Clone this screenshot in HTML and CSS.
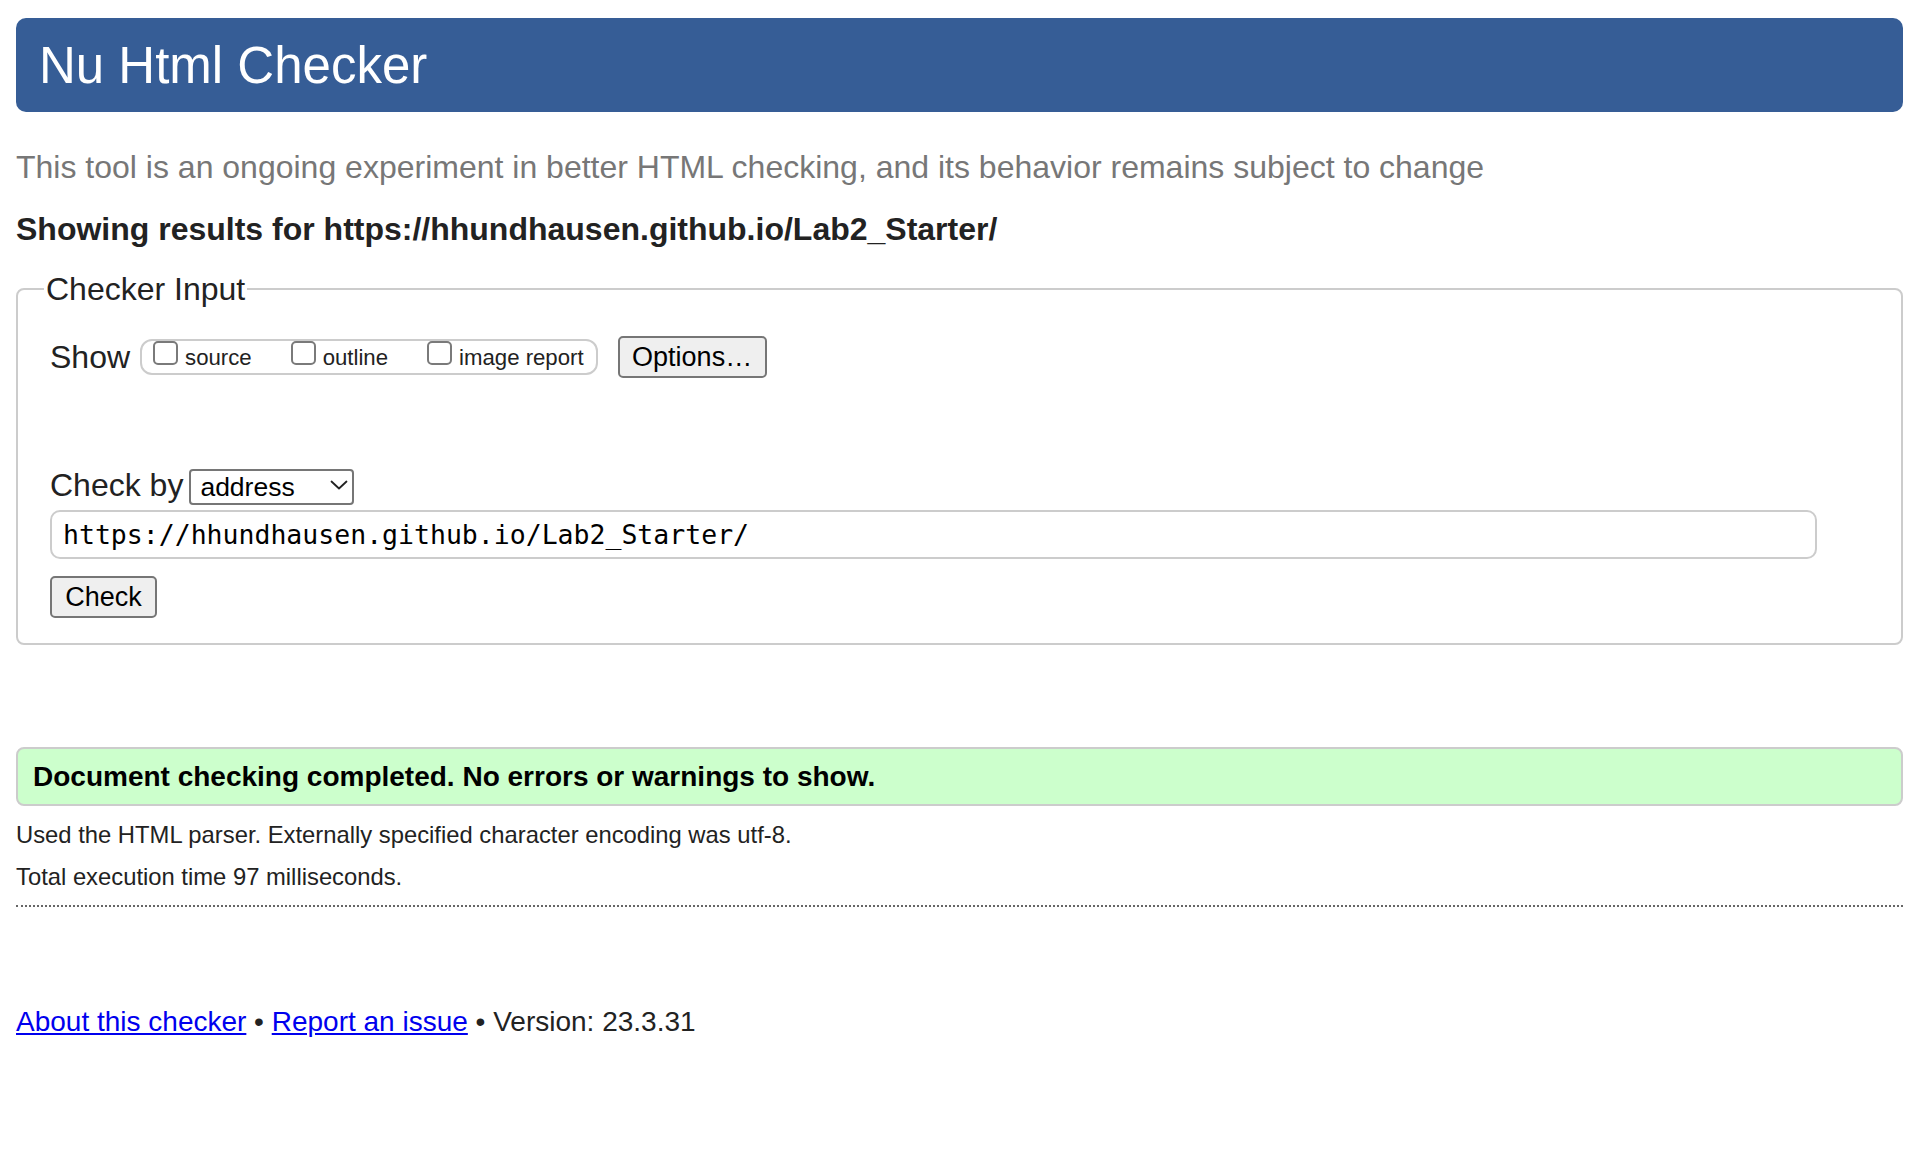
FILE: index.html
```html
<!DOCTYPE html>
<html lang="en">
<head>
<meta charset="utf-8">
<title>Nu Html Checker</title>
<link rel="stylesheet" href="styles.css">
</head>
<body>
<h1 class="banner">Nu Html Checker</h1>
<p class="lede">This tool is an ongoing experiment in better HTML checking, and its behavior remains subject to change</p>
<p class="results-for">Showing results for https://hhundhausen.github.io/Lab2_Starter/</p>
<form class="checker-form">
  <fieldset class="checker">
    <legend class="checker-legend">Checker Input</legend>
    <div class="show-row">
      <span class="row-label">Show</span>
      <span class="show-group"><label class="opt"><input type="checkbox" class="box"><span>source</span></label><label class="opt"><input type="checkbox" class="box"><span>outline</span></label><label class="opt"><input type="checkbox" class="box"><span>image report</span></label></span>
      <button type="button" class="btn btn-options">Options…</button>
    </div>
    <div class="checkby-row">
      <label class="row-label">Check by</label>
      <span class="select-wrap">
        <select class="select"><option>address</option></select>
        <svg class="chev" width="18" height="10" viewBox="0 0 18 10"><path d="M1.5 1.5 L9 8.5 L16.5 1.5" fill="none" stroke="#222" stroke-width="1.8" stroke-linecap="round" stroke-linejoin="round"/></svg>
      </span>
    </div>
    <input class="url" type="text" value="https://hhundhausen.github.io/Lab2_Starter/">
    <div class="check-row"><button type="button" class="btn btn-check">Check</button></div>
  </fieldset>
</form>
<p class="success">Document checking completed. No errors or warnings to show.</p>
<p class="details first">Used the HTML parser. Externally specified character encoding was utf-8.</p>
<p class="details">Total execution time 97 milliseconds.</p>
<hr class="rule">
<p class="footer"><a href="#">About this checker</a> • <a href="#">Report an issue</a> • Version: 23.3.31</p>
</body>
</html>
```
FILE: styles.css
```css
html { background: #fff; }
body {
  margin: 0;
  padding: 18px 21px 0 16px;
  font-family: "Liberation Sans", Arial, Helvetica, sans-serif;
  font-size: 32px;
  color: #222;
}
.banner {
  margin: 0;
  height: 94px;
  box-sizing: border-box;
  padding: 0 0 0 23px;
  display: flex;
  align-items: center;
  background: #365d96;
  color: #fff;
  font-size: 51px;
  font-weight: normal;
  line-height: 1;
  border-radius: 10px;
}
.lede {
  margin: 35px 0 0;
  line-height: 40px;
  color: #777;
}
.results-for {
  margin: 22px 0 0;
  line-height: 40px;
  font-weight: bold;
}
.checker-form { margin: 20px 0 0; }
.checker {
  margin: 0;
  padding: 0 32px 25px;
  border: 2px solid #ccc;
  border-radius: 8px;
  min-width: 0;
}
.checker-legend {
  line-height: 40px;
  padding: 0 2px;
  margin-left: -6px;
}
.show-row {
  margin-top: 27px;
  display: flex;
  align-items: center;
  height: 42px;
}
.row-label { line-height: 40px; }
.show-group {
  margin-left: 10px;
  height: 36px;
  box-sizing: border-box;
  border: 2px solid #ccc;
  border-radius: 12px;
  padding: 0 12px 0 11px;
  display: flex;
  align-items: center;
  gap: 39px;
  font-size: 22.2px;
  line-height: 32px;
  white-space: nowrap;
}
.opt { display: block; }
.box {
  -webkit-appearance: none;
  appearance: none;
  display: inline-block;
  vertical-align: -1px;
  width: 25px;
  height: 24px;
  margin: 0 7px 0 0;
  box-sizing: border-box;
  border: 2px solid #7a7a7a;
  border-radius: 5px;
  background: #fff;
}
.opt span { position: relative; top: 1px; }
.btn {
  font-family: "Liberation Sans", Arial, Helvetica, sans-serif;
  font-size: 27px;
  color: #000;
  background: #efefef;
  border: 2px solid #767676;
  border-radius: 5px;
  padding: 0;
  height: 42px;
  box-sizing: border-box;
}
.btn-options { margin-left: 20px; width: 149px; }
.checkby-row {
  margin-top: 89px;
  display: flex;
  align-items: center;
  height: 36px;
}
.select-wrap {
  position: relative;
  margin-left: 6px;
  display: block;
  height: 36px;
}
.select {
  -webkit-appearance: none;
  appearance: none;
  width: 165px;
  height: 36px;
  box-sizing: border-box;
  border: 2px solid #767676;
  border-radius: 4px;
  background: #fff;
  color: #000;
  font-family: "Liberation Sans", Arial, Helvetica, sans-serif;
  font-size: 26.5px;
  padding: 0 0 0 9px;
}
.chev {
  position: absolute;
  right: 6px;
  top: 13px;
  pointer-events: none;
}
.url {
  display: block;
  margin-top: 7px;
  width: 1767px;
  height: 49px;
  box-sizing: border-box;
  border: 2px solid #ccc;
  border-radius: 10px;
  padding: 0 0 0 11px;
  font-family: "DejaVu Sans Mono", "Liberation Mono", monospace;
  font-size: 26.5px;
  color: #000;
  background: #fff;
}
.check-row { margin-top: 17px; }
.btn-check { width: 107px; display: block; }
.success {
  margin: 102px 0 0;
  height: 59px;
  box-sizing: border-box;
  border: 2px solid #ccc;
  border-radius: 8px;
  background: #ccffcc;
  padding: 0 0 0 15px;
  display: flex;
  align-items: center;
  font-size: 28px;
  font-weight: bold;
  color: #000;
}
.details {
  margin: 8px 0 0;
  font-size: 23.8px;
  line-height: 34px;
}
.details.first { margin-top: 12px; }
.rule {
  margin: 11px 0 0;
  height: 0;
  border: 0;
  border-top: 2px dotted #666;
}
.footer {
  margin: 95px 0 0;
  font-size: 28px;
  line-height: 40px;
}
.footer a { color: #0000ee; text-decoration: underline; }
```
